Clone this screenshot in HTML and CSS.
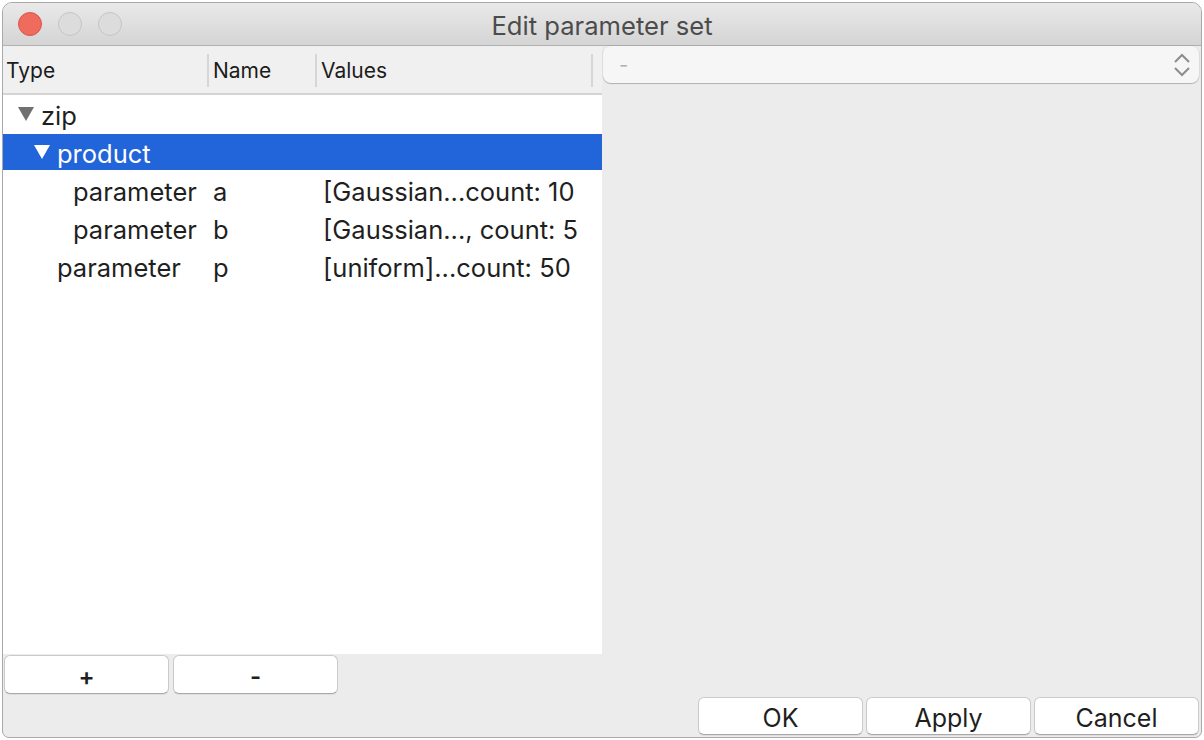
FILE: index.html
```html
<!DOCTYPE html>
<html>
<head>
<meta charset="utf-8">
<title>Edit parameter set</title>
<link rel="stylesheet" href="styles.css">
</head>
<body>
<div class="window">
  <div class="titlebar">
    <div class="lights">
      <span class="light close"></span>
      <span class="light"></span>
      <span class="light"></span>
    </div>
    <div class="title">Edit parameter set</div>
    <div class="spacer"></div>
  </div>
  <div class="content">
    <div class="left">
      <div class="table">
        <div class="thead">
          <div class="th th-type">Type</div>
          <div class="th th-name">Name</div>
          <div class="th th-values">Values</div>
          <div class="th th-rest"></div>
        </div>
        <div class="tbody">
          <div class="row">
            <div class="cell c-type d0"><svg class="tri" viewBox="0 0 16 14"><polygon points="0,0 16,0 8,14" fill="#707070"/></svg>zip</div>
            <div class="cell c-name"></div>
            <div class="cell c-values"></div>
          </div>
          <div class="row selected">
            <div class="cell c-type d1"><svg class="tri" viewBox="0 0 16 14"><polygon points="0,0 16,0 8,14" fill="#ffffff"/></svg>product</div>
            <div class="cell c-name"></div>
            <div class="cell c-values"></div>
          </div>
          <div class="row">
            <div class="cell c-type d2">parameter</div>
            <div class="cell c-name">a</div>
            <div class="cell c-values">[Gaussian...count: 10</div>
          </div>
          <div class="row">
            <div class="cell c-type d2">parameter</div>
            <div class="cell c-name">b</div>
            <div class="cell c-values">[Gaussian..., count: 5</div>
          </div>
          <div class="row">
            <div class="cell c-type d1 leaf">parameter</div>
            <div class="cell c-name">p</div>
            <div class="cell c-values">[uniform]...count: 50</div>
          </div>
        </div>
      </div>
      <div class="left-buttons">
        <button class="btn small">+</button>
        <button class="btn small">-</button>
      </div>
    </div>
    <div class="right">
      <div class="combo">
        <span class="combo-text">-</span>
        <svg class="chev" viewBox="0 0 18 26"><polyline points="2,10 9,3 16,10" fill="none" stroke="#8c8c8c" stroke-width="2"/><polyline points="2,16 9,23 16,16" fill="none" stroke="#8c8c8c" stroke-width="2"/></svg>
      </div>
      <div class="grow"></div>
      <div class="dialog-buttons">
        <button class="btn">OK</button>
        <button class="btn">Apply</button>
        <button class="btn">Cancel</button>
      </div>
    </div>
  </div>
</div>
</body>
</html>
```

FILE: styles.css
```css
html, body {
  margin: 0;
  padding: 0;
}
body {
  background: #ffffff;
  width: 1204px;
  height: 740px;
  overflow: hidden;
  font-family: Inter, "Noto Sans", "Liberation Sans", sans-serif;
  color: #1f1f1f;
}
.window {
  margin: 2px 0 0 2px;
  width: 1198px;
  height: 734px;
  border: 1px solid #a9a9a9;
  border-radius: 10px 10px 7px 7px;
  overflow: hidden;
  background: #ececec;
  display: flex;
  flex-direction: column;
}
.titlebar {
  height: 42px;
  flex: none;
  background: linear-gradient(#e9e9e9, #d4d4d4);
  border-bottom: 1px solid #b1b1b1;
  display: grid;
  grid-template-columns: 1fr auto 1fr;
  align-items: center;
}
.lights {
  display: flex;
  gap: 16px;
  padding-left: 15px;
}
.light {
  width: 22px;
  height: 22px;
  border-radius: 50%;
  background: #dcdcdc;
  border: 1px solid #c4c4c4;
}
.light.close {
  background: #ef6b5e;
  border-color: #d8564b;
}
.title {
  font-size: 25.6px;
  color: #4c4c4c;
  padding-top: 2px;
}
.content {
  flex: 1;
  display: grid;
  grid-template-columns: 599px 1fr;
  min-height: 0;
}
.left {
  display: flex;
  flex-direction: column;
}
.table {
  flex: 1;
  display: flex;
  flex-direction: column;
}
.thead {
  height: 47px;
  flex: none;
  background: #f0f0f0;
  border-bottom: 2px solid #d4d4d4;
  display: grid;
  grid-template-columns: 204px 108px 276px 1fr;
  align-items: center;
  font-size: 21px;
  color: #1c1c1c;
}
.th {
  height: 47px;
  display: flex;
  align-items: center;
  position: relative;
  padding-top: 2px;
  box-sizing: border-box;
}
.th-type { padding-left: 3px; }
.th-name { padding-left: 6px; }
.th-values { padding-left: 6px; }
.th-name::before, .th-values::before, .th-rest::before {
  content: "";
  position: absolute;
  left: 0;
  top: 8px;
  bottom: 6px;
  width: 2px;
  background: #d6d6d6;
}
.tbody {
  flex: 1;
  background: #ffffff;
  padding-top: 1px;
  font-size: 25.5px;
}
.row {
  height: 36px;
  margin-bottom: 2px;
  display: grid;
  grid-template-columns: 204px 108px 1fr;
  align-items: center;
}
.row.selected {
  background: #2264d9;
  color: #ffffff;
}
.cell {
  display: flex;
  align-items: center;
  white-space: nowrap;
  padding-top: 2px;
}
.c-type.d0 { padding-left: 15px; }
.c-type.d1 { padding-left: 31px; }
.c-type.d1.leaf { padding-left: 54px; }
.c-type.d2 { padding-left: 70px; }
.tri {
  width: 16px;
  height: 14px;
  margin-right: 7px;
  margin-top: -3px;
}
.c-name { padding-left: 6px; }
.c-values { padding-left: 8px; }
.left-buttons {
  height: 83px;
  flex: none;
  display: flex;
  align-items: flex-start;
  gap: 4px;
  padding: 1px 0 0 1px;
  box-sizing: border-box;
}
.btn {
  width: 165px;
  height: 38px;
  background: #ffffff;
  border: 1px solid #cacaca;
  border-bottom-color: #a9a9a9;
  border-radius: 6px;
  box-shadow: 0 1px 0 rgba(0,0,0,0.06);
  font-family: Inter, "Noto Sans", "Liberation Sans", sans-serif;
  font-size: 25px;
  color: #1f1f1f;
  padding: 3px 0 0 0;
}
.btn.small {
  width: 165px;
  height: 39px;
  font-size: 24px;
  font-weight: 600;
}
.right {
  display: flex;
  flex-direction: column;
  padding: 0 2px 2px 1px;
}
.combo {
  height: 37px;
  background: #f6f6f6;
  border-radius: 8px;
  box-shadow: 0 1px 1px rgba(0,0,0,0.22), 0 0 0 1px rgba(0,0,0,0.04);
  display: flex;
  align-items: center;
  justify-content: space-between;
  padding: 0 8px 0 16px;
}
.combo-text {
  color: #b3b3b3;
  font-size: 20px;
}
.chev {
  width: 18px;
  height: 26px;
}
.grow { flex: 1; }
.dialog-buttons {
  display: flex;
  justify-content: flex-end;
  gap: 3px;
}
```
